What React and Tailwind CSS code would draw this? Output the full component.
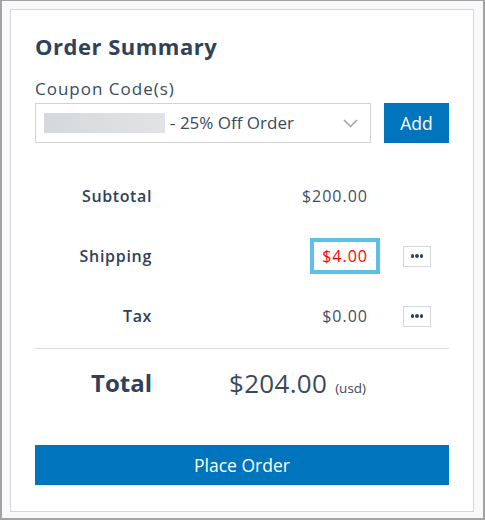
export default function App() {
  const font = { fontFamily: '"Open Sans", "Noto Sans", sans-serif' };
  const Dots = () => (
    <button className="w-[28px] h-[21px] border border-[#d3d6da] bg-white flex items-center justify-center gap-[1px]">
      <span className="w-[3.5px] h-[3.5px] rounded-full bg-[#2e4258]"></span>
      <span className="w-[3.5px] h-[3.5px] rounded-full bg-[#2e4258]"></span>
      <span className="w-[3.5px] h-[3.5px] rounded-full bg-[#2e4258]"></span>
    </button>
  );
  return (
    <div style={font} className="w-[485px] h-[520px] bg-[#f9f9fb] border-t border-l-2 border-r-2 border-b-2 border-[#a3a3a3] box-border">
      <div className="ml-[8px] mt-[8px] w-[464px] h-[503px] bg-white border border-[#d6d6d6] px-[24px] pt-[22px] box-border">
        <h1 className="text-[22px] leading-[28px] font-bold text-[#2f4259] tracking-[0.5px]">Order Summary</h1>
        <div className="mt-[17px] text-[17px] leading-[24px] text-[#3a4a5c] tracking-[1px]">Coupon Code(s)</div>
        <div className="mt-[2px] flex">
          <div className="w-[336px] h-[40px] border border-[#d2d2d2] flex items-center pl-[8px] pr-[12px]">
            <span className="w-[121px] h-[20px] bg-gradient-to-r from-[#d6d9dc] to-[#e1e3e5]"></span>
            <span className="ml-[5px] text-[17px] text-[#3a4a5c]">- 25% Off Order</span>
            <svg className="ml-auto" width="15" height="9" viewBox="0 0 15 9" fill="none">
              <path d="M1 1l6.5 6.5L14 1" stroke="#9aa0a6" strokeWidth="1.5" />
            </svg>
          </div>
          <button className="ml-[13px] w-[65px] h-[40px] bg-[#0074bd] text-white text-[17.5px]">Add</button>
        </div>

        <div className="mt-[33px] flex flex-col gap-[20px]">
          <div className="flex items-center h-[40px]">
            <div className="w-[117px] text-right text-[16px] font-semibold text-[#2f4259] tracking-[0.6px]">Subtotal</div>
            <div className="w-[228px] flex justify-end">
              <span className="border-4 border-transparent pl-[8px] pr-[8px] py-[2px] text-[16px] text-[#3f4f62] tracking-[1px]">$200.00</span>
            </div>
          </div>
          <div className="flex items-center h-[40px]">
            <div className="w-[117px] text-right text-[16px] font-semibold text-[#2f4259] tracking-[0.7px]">Shipping</div>
            <div className="w-[228px] flex justify-end">
              <span className="border-4 border-[#5bc0e8] pl-[8px] pr-[8px] py-[2px] text-[16px] text-[#ff0000] tracking-[1px]">$4.00</span>
            </div>
            <div className="ml-[23px]"><Dots /></div>
          </div>
          <div className="flex items-center h-[40px]">
            <div className="w-[117px] text-right text-[16px] font-semibold text-[#2f4259] tracking-[0.6px]">Tax</div>
            <div className="w-[228px] flex justify-end">
              <span className="border-4 border-transparent pl-[8px] pr-[8px] py-[2px] text-[16px] text-[#3f4f62] tracking-[1px]">$0.00</span>
            </div>
            <div className="ml-[23px]"><Dots /></div>
          </div>
        </div>

        <div className="mt-[12px] h-px bg-[#dcdcdc]"></div>

        <div className="mt-[14px] flex items-center h-[40px]">
          <div className="w-[117px] text-right text-[24px] font-bold text-[#2f4259]">Total</div>
          <div className="ml-[77px] flex items-baseline">
            <span className="text-[26px] text-[#3a4a5c] tracking-[0.3px]">$204.00</span>
            <span className="ml-[8px] text-[13.5px] text-[#3a4a5c]">(usd)</span>
          </div>
        </div>

        <button className="mt-[42px] w-full h-[40px] bg-[#0074bd] text-white text-[17.5px]">Place Order</button>
      </div>
    </div>
  );
}
